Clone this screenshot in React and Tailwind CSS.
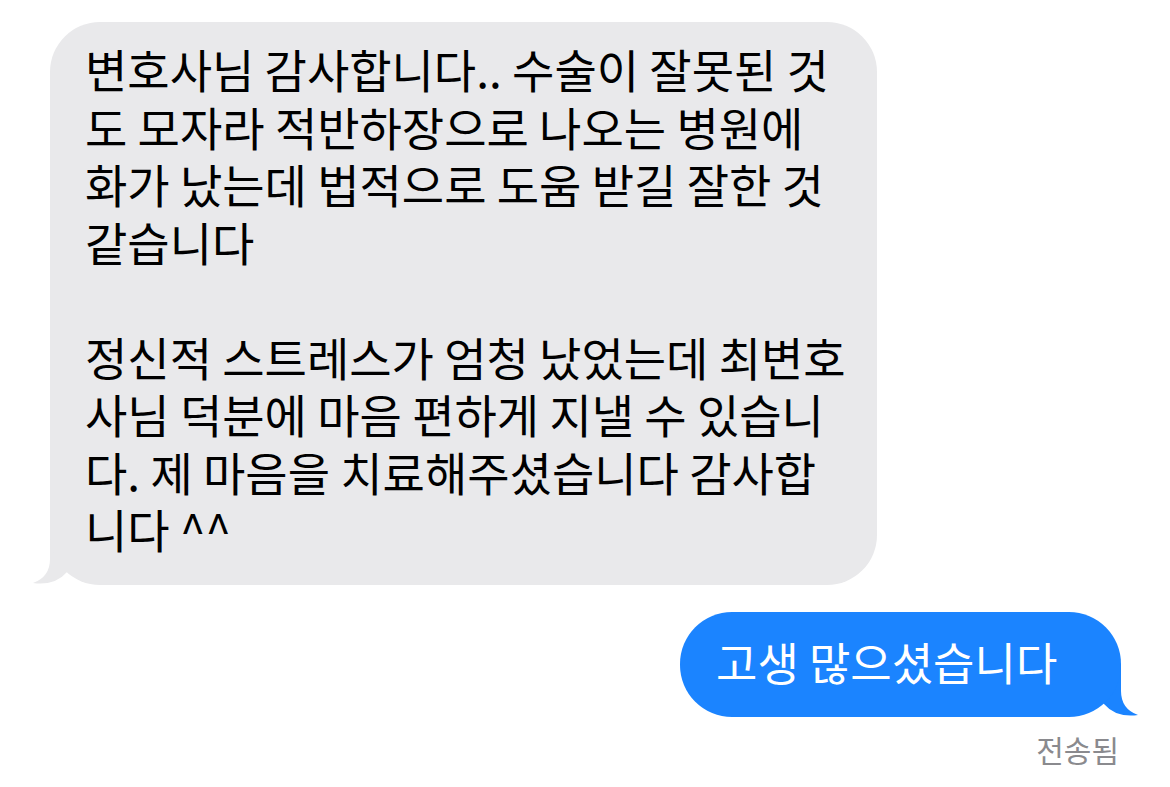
import React from "react";

const font = { fontFamily: '"Noto Sans CJK KR", "Noto Sans", sans-serif' };

const lines1 = [
  "변호사님 감사합니다.. 수술이 잘못된 것",
  "도 모자라 적반하장으로 나오는 병원에",
  "화가 났는데 법적으로 도움 받길 잘한 것",
  "같습니다",
];
const lines2 = [
  "정신적 스트레스가 엄청 났었는데 최변호",
  "사님 덕분에 마음 편하게 지낼 수 있습니",
  "다. 제 마음을 치료해주셨습니다 감사합",
  "니다 ^^",
];

export default function App() {
  return (
    <div
      className="w-[1170px] h-[787px] bg-white flex flex-col overflow-hidden"
      style={font}
    >
      <div className="relative ml-[50px] mt-[22px] w-[827px] h-[563px]">
        <div className="absolute left-[-17px] bottom-0 w-[50px] h-[52px]">
          <svg width="50" height="52" viewBox="0 0 50 52">
            <path
              d="M17 0 L17 26 Q17 44 0 50 Q22 53 34 39 L45 30 L45 0 Z"
              fill="#e9e9eb"
            />
          </svg>
        </div>
        <div className="relative h-full rounded-[50px] bg-[#e9e9eb] pl-[35px] pt-[18px] text-[46px] leading-[57.5px] text-black">
          {lines1.map((l) => (
            <div key={l} className="whitespace-nowrap">{l}</div>
          ))}
          <div className="h-[57.5px]" />
          {lines2.map((l) => (
            <div key={l} className="whitespace-nowrap">{l}</div>
          ))}
        </div>
      </div>

      <div className="relative self-end mr-[49px] mt-[27px] w-[441px] h-[105px]">
        <div className="absolute right-[-17px] bottom-0 w-[50px] h-[52px]">
          <svg width="50" height="52" viewBox="0 0 50 52">
            <path
              d="M33 0 L33 26 Q33 44 50 50 Q28 53 16 39 L5 30 L5 0 Z"
              fill="#1b84ff"
            />
          </svg>
        </div>
        <div className="relative h-full rounded-[52px] bg-[#1b84ff] flex items-center pl-[36px] pb-[6px] text-[45px] leading-[57px] text-white whitespace-nowrap">
          고생 많으셨습니다
        </div>
      </div>

      <div className="self-end mr-[51px] mt-[14px] text-[30px] leading-[36px] text-[#8a8a8e]">
        전송됨
      </div>
    </div>
  );
}
